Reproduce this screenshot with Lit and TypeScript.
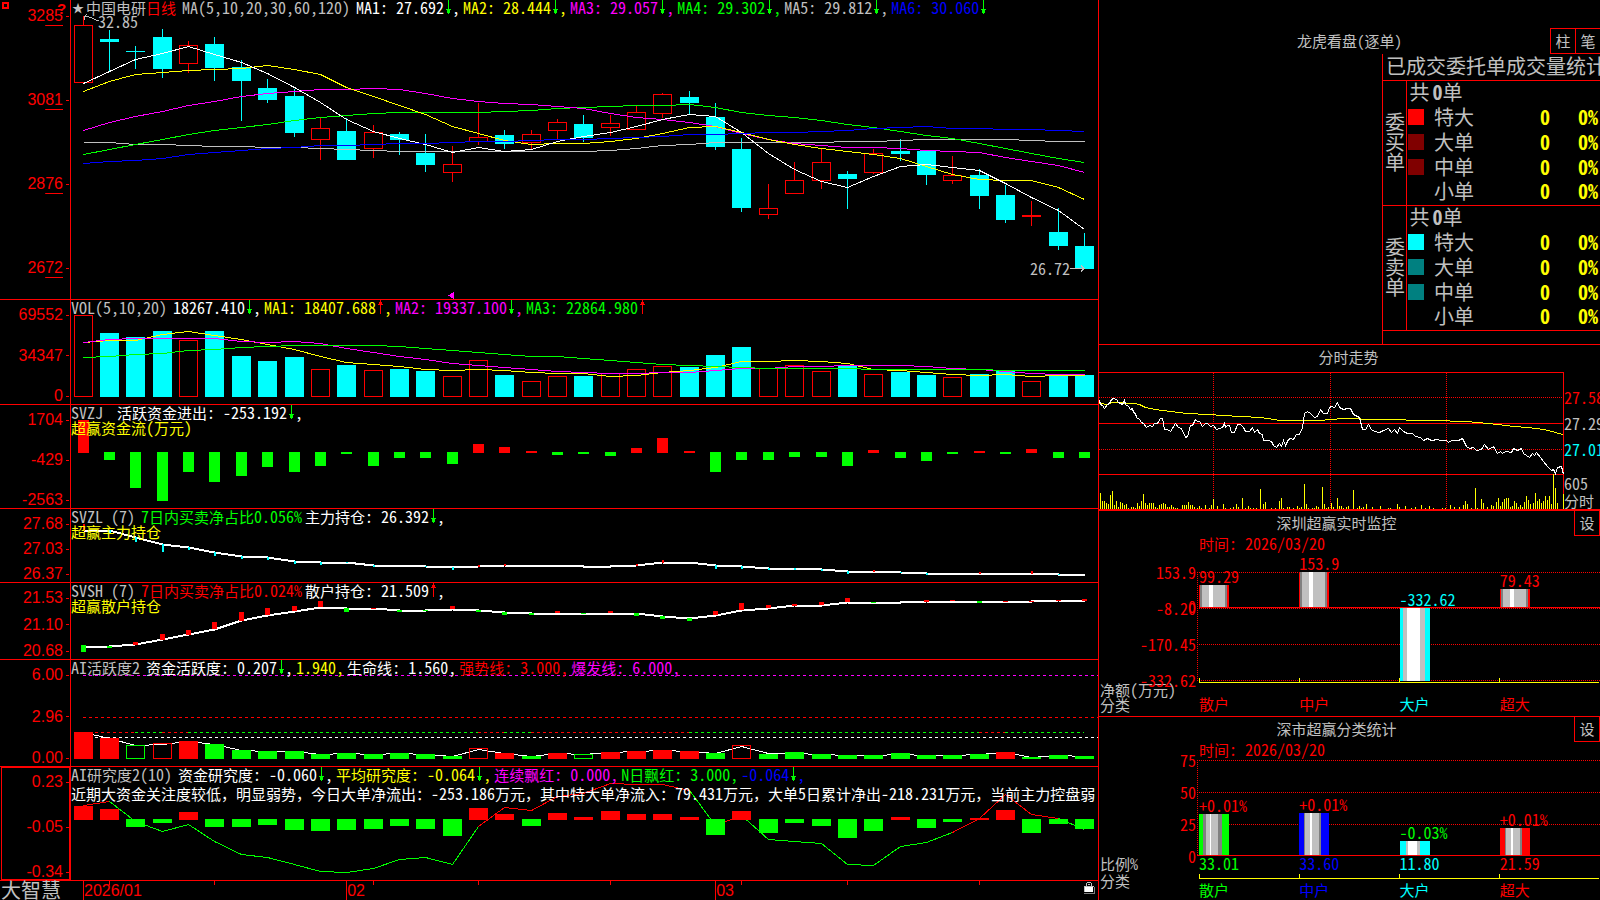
import { LitElement, html, css, svg, nothing } from "lit";
import { customElement } from "lit/decorators.js";

const RED = "#ff0000";
const CYAN = "#00ffff";
const GREEN = "#00ff00";
const YELLOW = "#ffff00";
const MAGENTA = "#ff00ff";
const BLUE = "#0000ff";
const WHITE = "#ffffff";
const SILVER = "#c0c0c0";
const GRAY = "#808080";

/* Centre of the n-th trading day on the shared time axis. */
const cx = (i: number) => Math.floor(83.2 + 26.35 * i);
/* Values are kept in thirds of a unit below the origin of their chart. */
const at = (origin: number, v: number) => Math.round(origin + v / 3);

type Candle = [string, number, number, number, number];
const CANDLES: Candle[] = [
  ["r", 16, 25, 83, 83], ["c", 30, 39, 42, 72], ["c", 46, 51, 52, 69], ["c", 29, 37, 69, 78],
  ["r", 41, 45, 64, 73], ["c", 37, 44, 68, 81], ["c", 60, 67, 81, 121], ["c", 79, 88, 100, 103],
  ["c", 89, 96, 133, 137], ["r", 118, 128, 140, 160], ["c", 118, 131, 160, 160], ["r", 125, 132, 149, 158],
  ["c", 132, 134, 140, 155], ["c", 134, 153, 165, 172], ["r", 146, 164, 173, 182], ["r", 103, 137, 142, 145],
  ["c", 130, 135, 144, 149], ["r", 130, 134, 143, 149], ["r", 119, 122, 131, 139], ["c", 115, 124, 138, 142],
  ["r", 115, 123, 128, 136], ["r", 106, 112, 130, 130], ["r", 93, 94, 114, 118], ["c", 91, 97, 103, 114],
  ["c", 103, 117, 147, 150], ["c", 138, 149, 208, 212], ["r", 184, 208, 215, 219], ["r", 162, 180, 194, 194],
  ["r", 148, 162, 181, 189], ["c", 171, 174, 179, 209], ["r", 149, 153, 173, 174], ["c", 139, 151, 154, 161],
  ["c", 151, 151, 175, 185], ["r", 156, 175, 181, 184], ["c", 169, 175, 196, 209], ["c", 185, 195, 220, 223],
  ["r", 201, 215, 217, 226], ["c", 208, 232, 246, 250], ["c", 233, 246, 269, 269],
];

const MA: [string, number[]][] = [
  [SILVER, [427, 427, 431, 433, 436, 437, 439, 442, 442, 445, 448, 451, 452, 454, 454, 454, 454, 454, 454, 452, 449, 443, 436, 431, 427, 427, 427, 427, 427, 424, 424, 421, 418, 418, 418, 418, 421, 424, 424]],
  [GREEN, [463, 447, 432, 417, 403, 390, 382, 372, 361, 352, 346, 340, 337, 337, 337, 337, 334, 330, 325, 322, 319, 316, 314, 313, 321, 335, 346, 351, 359, 371, 382, 394, 405, 415, 429, 444, 460, 474, 487]],
  [MAGENTA, [391, 367, 348, 333, 316, 304, 289, 280, 273, 268, 268, 265, 268, 280, 295, 304, 310, 313, 318, 325, 340, 351, 357, 365, 378, 400, 418, 430, 436, 441, 442, 445, 451, 452, 457, 470, 482, 496, 517]],
  [YELLOW, [274, 244, 223, 217, 209, 207, 203, 196, 208, 223, 262, 289, 315, 343, 378, 400, 420, 431, 428, 430, 423, 415, 400, 382, 377, 397, 418, 431, 443, 454, 463, 475, 498, 523, 538, 541, 541, 562, 596]],
  [WHITE, [250, 213, 177, 159, 139, 163, 187, 219, 260, 307, 357, 393, 415, 432, 457, 442, 452, 448, 422, 407, 397, 379, 356, 343, 348, 397, 458, 508, 543, 562, 528, 497, 493, 502, 511, 548, 590, 630, 686]],
  [BLUE, [490, 484, 479, 473, 463, 457, 451, 444, 441, 436, 436, 433, 430, 428, 427, 424, 422, 420, 418, 416, 414, 411, 407, 403, 401, 400, 397, 397, 394, 390, 385, 382, 379, 385, 385, 388, 388, 391, 394]],
];

const VOLUME = [76, 129, 141, 123, 151, 123, 198, 213, 201, 238, 225, 241, 237, 243, 259, 211, 255, 274, 259, 258, 250, 238, 229, 231, 195, 171, 235, 226, 244, 226, 253, 247, 255, 261, 252, 243, 274, 255, 255];
const VOLUME_MA: [string, number[]][] = [
  [YELLOW, [157, 151, 151, 131, 124, 136, 148, 163, 178, 197, 216, 223, 229, 238, 241, 238, 241, 246, 250, 250, 259, 256, 247, 240, 230, 214, 214, 211, 212, 218, 237, 241, 247, 252, 256, 253, 259, 256, 256]],
  [MAGENTA, [157, 148, 145, 145, 145, 145, 152, 157, 154, 160, 174, 186, 197, 208, 220, 226, 232, 238, 243, 246, 250, 250, 247, 247, 241, 235, 235, 229, 229, 226, 226, 226, 229, 233, 238, 244, 250, 253, 253]],
  [GREEN, [202, 197, 193, 188, 181, 177, 172, 169, 166, 166, 166, 166, 169, 175, 180, 187, 193, 198, 199, 205, 211, 217, 223, 226, 229, 232, 235, 235, 235, 235, 237, 238, 238, 238, 238, 241, 241, 241, 241]],
];

const FLOW = [391, 510, 594, 633, 546, 576, 558, 531, 546, 528, 492, 528, 504, 504, 522, 462, 471, 483, 495, 492, 498, 474, 444, 483, 546, 510, 510, 501, 501, 528, 480, 504, 513, 492, 483, 492, 477, 504, 504];

const MAIN_HOLD = [720, 720, 740, 761, 770, 785, 797, 802, 812, 817, 817, 824, 826, 827, 831, 829, 825, 825, 825, 827, 828, 825, 816, 816, 825, 829, 834, 834, 838, 843, 843, 845, 849, 849, 849, 849, 849, 851, 852];
const MAIN_MARKS: [number, number][] = [[0, 703], [1, 728], [2, 755], [3, 786], [4, 780], [5, 798], [6, 806], [7, 809], [8, 822], [9, 825], [10, 820], [11, 831], [13, 831], [14, 839], [15, 825], [16, 821], [21, 822], [22, 810], [24, 837], [25, 837], [26, 840], [27, 839], [28, 843], [29, 852], [30, 839], [31, 849], [32, 855], [34, 845], [36, 843], [37, 855]];

const RETAIL_HOLD = [198, 198, 193, 178, 163, 146, 121, 104, 92, 80, 84, 84, 90, 90, 86, 90, 97, 98, 98, 98, 98, 100, 108, 115, 104, 89, 83, 76, 74, 66, 66, 66, 64, 63, 63, 63, 63, 60, 60];
const RETAIL_MARKS: [number, string, number, number][] = [[0, "g", 195, 216], [1, "g", 198, 204], [2, "r", 185, 195], [3, "r", 162, 180], [4, "r", 150, 165], [5, "r", 126, 147], [6, "r", 96, 123], [7, "r", 84, 104], [8, "r", 78, 93], [9, "r", 63, 80], [10, "g", 84, 96], [11, "r", 84, 87], [12, "g", 90, 96], [13, "g", 90, 93], [14, "r", 78, 87], [15, "g", 90, 96], [16, "g", 96, 105], [17, "g", 98, 104], [18, "r", 93, 99], [19, "g", 99, 102], [20, "r", 93, 99], [21, "g", 99, 108], [22, "g", 108, 117], [23, "g", 114, 123], [24, "r", 93, 104], [25, "r", 69, 90], [26, "r", 75, 84], [27, "r", 72, 78], [28, "r", 66, 75], [29, "r", 54, 66], [30, "g", 66, 69], [32, "r", 60, 65], [33, "r", 60, 63], [34, "g", 63, 69], [35, "r", 63, 66], [36, "r", 63, 66], [37, "r", 60, 63], [38, "r", 57, 63]];

/* Upper case: solid bar. Lower case: outline only. */
const ACTIVE: [string, number][] = [["R", 456], ["R", 474], ["g", 495], ["r", 489], ["R", 483], ["G", 492], ["G", 510], ["G", 513], ["G", 513], ["G", 522], ["G", 519], ["G", 522], ["G", 519], ["G", 522], ["G", 528], ["r", 504], ["R", 519], ["G", 528], ["R", 519], ["g", 522], ["R", 516], ["R", 513], ["R", 510], ["R", 513], ["G", 519], ["r", 495], ["G", 522], ["G", 516], ["G", 522], ["G", 525], ["G", 525], ["G", 519], ["G", 525], ["G", 525], ["G", 522], ["R", 516], ["G", 531], ["G", 525], ["G", 528]];
const ACTIVE_LINE = [456, 474, 495, 491, 484, 492, 510, 513, 514, 522, 519, 523, 520, 523, 528, 506, 518, 527, 519, 523, 516, 513, 510, 514, 519, 497, 520, 518, 521, 525, 526, 521, 525, 526, 523, 517, 530, 526, 529];
const ACTIVE_BASE: [number, number, string][] = [[0, 2, RED], [2, 3, GREEN], [3, 4, RED], [4, 15, GREEN], [15, 16, RED], [16, 17, GREEN], [17, 23, RED], [23, 34, GREEN], [34, 35, RED], [35, 38, GREEN]];

const STUDY = [678, 687, 741, 729, 696, 741, 741, 735, 750, 753, 750, 747, 738, 747, 768, 684, 702, 738, 699, 711, 693, 702, 702, 711, 765, 693, 759, 729, 738, 774, 753, 711, 744, 726, 714, 690, 759, 732, 747];
const STUDY_LINE = [676, 662, 722, 754, 731, 784, 822, 832, 852, 874, 877, 865, 838, 832, 853, 738, 680, 690, 648, 640, 608, 612, 613, 631, 736, 704, 778, 782, 790, 852, 856, 797, 787, 757, 713, 641, 703, 714, 748];
const STUDY_RUNS: [number, number, string][] = [[0, 1, RED], [1, 15, GREEN], [15, 23, RED], [23, 24, GREEN], [24, 25, RED], [25, 33, GREEN], [33, 37, RED], [37, 38, GREEN]];

const TICK_PRICE = "27,180 30,193 36,194 43,204 50,193 58,190 63,178 68,175 78,178 85,187 95,192 99,185 103,180 106,193 113,198 119,207 125,205 128,216 134,219 137,231 146,237 153,247 160,248 167,262 176,255 186,258 192,250 201,248 210,234 215,234 222,268 230,266 240,274 254,250 265,260 274,265 285,290 290,288 300,256 306,254 314,238 320,242 326,242 335,258 344,250 352,249 360,258 368,254 378,268 388,265 396,262 401,249 405,262 412,255 418,256 422,277 433,277 441,251 450,251 460,260 466,274 477,272 487,260 492,276 500,267 507,280 515,283 520,301 535,300 542,304 549,314 557,322 566,308 572,318 579,301 586,314 594,297 601,294 610,297 618,281 628,283 637,262 643,220 651,214 659,220 672,232 680,227 690,206 698,218 710,220 718,202 724,198 733,202 742,187 748,202 760,206 770,203 779,203 790,223 800,229 808,232 817,268 825,266 833,253 842,268 853,274 866,276 880,270 895,264 902,275 912,268 920,280 928,262 940,272 952,278 965,278 975,288 990,292 1000,300 1012,293 1022,300 1040,297 1050,301 1068,301 1075,306 1082,301 1105,301 1117,295 1127,318 1137,324 1148,320 1158,329 1174,328 1182,313 1195,326 1210,317 1220,339 1230,332 1236,340 1245,334 1262,337 1270,325 1282,330 1292,324 1300,338 1318,352 1325,338 1333,346 1338,337 1350,352 1358,362 1370,379 1383,390 1390,386 1396,398 1402,380 1413,379 1420,402";
const TICK_AVG = "27,190 50,192 65,187 128,188 148,193 165,202 195,208 240,213 290,219 350,221 400,225 450,227 510,231 570,239 640,241 690,241 720,238 760,235 865,236 880,238 1015,239 1030,241 1125,243 1160,247 1220,251 1270,257 1310,260 1360,266 1385,273 1403,280 1420,281";
const TICK_VOL = "31,460 37,484 43,484 49,488 55,493 61,466 67,453 73,496 79,483 85,500 91,487 97,490 103,496 109,492 115,504 124,502 130,502 136,504 142,490 148,498 154,484 160,462 166,490 172,496 178,490 184,490 190,489 196,501 202,504 208,494 214,493 220,490 226,493 230,502 236,500 242,496 248,502 254,503 260,504 276,495 282,495 289,495 295,487 301,495 307,496 313,502 322,503 328,498 334,504 346,495 358,504 364,496 370,478 382,499 400,492 406,504 421,504 430,502 439,492 445,500 457,475 466,504 475,498 481,504 490,503 499,504 511,447 520,492 526,486 544,504 556,504 568,484 574,475 580,504 592,500 598,501 610,504 622,499 628,504 634,500 643,432 649,492 655,503 667,504 673,504 679,498 685,500 697,441 703,492 709,504 715,502 724,490 730,502 742,475 748,499 754,498 760,504 769,502 775,498 790,450 802,504 808,498 814,504 820,500 829,492 847,500 871,498 895,504 900,503 922,492 928,500 945,499 963,504 975,501 994,495 1006,504 1018,498 1030,504 1055,504 1066,503 1081,495 1093,501 1108,500 1120,495 1126,484 1132,492 1144,503 1156,444 1162,504 1174,478 1180,489 1192,500 1204,496 1210,499 1219,487 1225,475 1231,499 1237,486 1243,477 1249,475 1255,474 1261,501 1267,499 1273,484 1279,488 1285,500 1291,496 1297,500 1303,486 1309,468 1315,480 1321,492 1330,490 1336,459 1342,484 1348,477 1354,490 1360,484 1366,468 1372,480 1378,468 1384,492 1390,402 1396,444 1402,490 1420,462";

const pairs = (s: string) => s.split(" ").map((p) => p.split(",").map(Number));

const line = (color: string, origin: number, v: number[], width = 1, from = 0, to = v.length - 1) => svg`
  <polyline fill="none" stroke=${color} stroke-width=${width} vector-effect="non-scaling-stroke"
    points=${v.slice(from, to + 1).map((y, k) => `${cx(from + k) + 0.5},${at(origin, y) + 0.5}`).join(" ")} />`;

const box = (x: number, y: number, w: number, h: number, color: string, hollow = false) =>
  hollow
    ? svg`<rect x=${x + 0.5} y=${y + 0.5} width=${w - 1} height=${Math.max(h - 1, 1)} fill="none" stroke=${color} vector-effect="non-scaling-stroke" />`
    : svg`<rect x=${x} y=${y} width=${w} height=${h} fill=${color} />`;

const rule = (x1: number, y1: number, x2: number, y2: number, color: string, dash = "") =>
  svg`<line x1=${x1} y1=${y1} x2=${x2} y2=${y2} stroke=${color} stroke-dasharray=${dash || nothing} vector-effect="non-scaling-stroke" />`;

/* Han characters are set one size below the half-width ones. */
const mixed = (s: string) =>
  s.split(/([\u3000-\u9fff\uff00-\uffef]+)/).map((p, i) => (i % 2 ? html`<span class="han">${p}</span>` : p));

const arrow = (dir: string) =>
  dir === "down"
    ? html`<svg class="arrow" viewBox="0 0 8 15" shape-rendering="crispEdges"><path fill=${GREEN} d="M4 0h1v14h-1zM2 9h5v1h-5zM3 10h3v3h-3z" /></svg>`
    : html`<svg class="arrow" viewBox="0 0 8 15" shape-rendering="crispEdges"><path fill=${RED} d="M4 0h1v14h-1zM3 2h3v2h-3zM2 4h5v1h-5z" /></svg>`;

interface Item { color: string; text: string; dir?: string; tail?: string }
interface Panel {
  height: number; top: number; name: string; items: Item[]; note?: string; message?: string;
  ticks: string[]; chart: unknown; kind?: string;
}

const item = (color: string, text: string, dir = "", tail = ""): Item => ({ color, text, dir, tail });

const priceChart = () => svg`
  ${CANDLES.map(([k, hi, top, bot, lo], i) => {
    const c = cx(i);
    const color = k === "r" ? RED : CYAN;
    return svg`
      ${top > hi ? box(c, hi, 1, top - hi, color) : nothing}
      ${lo > bot ? box(c, bot, 1, lo - bot, color) : nothing}
      ${box(c - 9, top, 19, bot - top, color, k === "r")}`;
  })}
  ${MA.map(([c, v]) => line(c, 0, v))}
  <path d="M84 16.5h4l5 2 4 2h2M84.5 16v4M84 16.5l3-2" fill="none" stroke=${SILVER} />
  <path d="M1070 268.5h14M1081 265.5l3 3-3 3" fill="none" stroke=${SILVER} />
  <path d="M448 295.5l5-3v6zM453 292h1v7h-1z" fill=${MAGENTA} />`;

const volumeChart = () => svg`
  ${VOLUME.map((v, i) => {
    const y = at(290, v);
    return box(cx(i) - 9, y, 19, 397 - y, CANDLES[i][0] === "r" ? RED : CYAN, CANDLES[i][0] === "r");
  })}
  ${VOLUME_MA.map(([c, v]) => line(c, 290, v))}`;

const flowChart = () => svg`${FLOW.map((v, i) => {
  const y = at(290, v);
  return v < 487 ? box(cx(i) - 5, y, 11, 453 - y, RED) : box(cx(i) - 5, 452, 11, y - 452, GREEN);
})}`;

const mainHoldChart = () => svg`
  ${line(WHITE, 290, MAIN_HOLD, 2)}
  ${MAIN_MARKS.map(([i, v]) => {
    const a = at(290, MAIN_HOLD[i]);
    const b = at(290, v);
    return b < a ? box(cx(i), b, 2, a - b + 1, RED) : box(cx(i), a, 2, b - a, CYAN);
  })}`;

const retailHoldChart = () => svg`
  ${line(WHITE, 580, RETAIL_HOLD, 2)}
  ${RETAIL_MARKS.map(([i, k, a, b]) => box(cx(i) - 2, at(580, a), 5, at(580, b) - at(580, a), k === "r" ? RED : GREEN))}`;

const activeChart = () => svg`
  ${rule(83, 675.5, 1098, 675.5, MAGENTA, "3 3")}
  ${rule(83, 717.5, 1098, 717.5, RED, "3 3")}
  ${ACTIVE_BASE.map(([a, b, c]) => rule(cx(a), 732.5, cx(b), 732.5, c, "3 3"))}
  ${rule(83, 737.5, 1098, 737.5, WHITE, "3 3")}
  ${line(WHITE, 580, ACTIVE_LINE)}
  ${ACTIVE.map(([k, v], i) => {
    const y = at(580, v);
    return box(cx(i) - 9, y, 19, 759 - y, k.toUpperCase() === "R" ? RED : GREEN, k === k.toLowerCase());
  })}`;

const studyChart = () => svg`
  ${STUDY_RUNS.map(([a, b, c]) => line(c, 580, STUDY_LINE, 1, a, b))}
  ${STUDY.map((v, i) => {
    const y = at(580, v);
    return v < 717 ? box(cx(i) - 9, y, 19, 820 - y, RED) : box(cx(i) - 9, 819, 19, y - 819, GREEN);
  })}`;

const PANELS: Panel[] = [
  {
    height: 299, top: 0, name: "", kind: "price", ticks: ["3285", "3081", "2876", "2672"], chart: priceChart(),
    items: [
      item(WHITE, "MA1: 27.692", "down", ","), item(YELLOW, "MA2: 28.444", "down", ","),
      item(MAGENTA, "MA3: 29.057", "down", ","), item(GREEN, "MA4: 29.302", "down", ","),
      item(SILVER, "MA5: 29.812", "down", ","), item(BLUE, "MA6: 30.060", "down"),
    ],
  },
  {
    height: 104, top: 300, name: "VOL(5,10,20)", ticks: ["69552", "34347", "0"], chart: volumeChart(),
    items: [
      item(WHITE, "18267.410", "down", ","), item(YELLOW, "MA1: 18407.688", "up", ","),
      item(MAGENTA, "MA2: 19337.100", "down", ","), item(GREEN, "MA3: 22864.980", "up"),
    ],
  },
  {
    height: 103, top: 405, name: "SVZJ ", note: "超赢资金流(万元)", ticks: ["1704", "-429", "-2563"], chart: flowChart(),
    items: [item(WHITE, "活跃资金进出: -253.192", "down", ",")],
  },
  {
    height: 73, top: 509, name: "SVZL (7)", note: "超赢主力持仓", ticks: ["27.68", "27.03", "26.37"], chart: mainHoldChart(),
    items: [item(GREEN, "7日内买卖净占比0.056%"), item(WHITE, "主力持仓: 26.392", "down", ",")],
  },
  {
    height: 76, top: 583, name: "SVSH (7)", note: "超赢散户持仓", ticks: ["21.53", "21.10", "20.68"], chart: retailHoldChart(),
    items: [item(RED, "7日内买卖净占比0.024%"), item(WHITE, "散户持仓: 21.509", "up", ",")],
  },
  {
    height: 106, top: 660, name: "AI活跃度2", ticks: ["6.00", "2.96", "0.00"], chart: activeChart(),
    items: [
      item(WHITE, "资金活跃度: 0.207", "down", ","), item(YELLOW, "1.940,"), item(WHITE, "生命线: 1.560,"),
      item(RED, "强势线: 3.000,"), item(MAGENTA, "爆发线: 6.000,"),
    ],
  },
  {
    height: 113, top: 767, name: "AI研究度2(10)", kind: "selected", ticks: ["0.23", "-0.05", "-0.34"], chart: studyChart(),
    message: "近期大资金关注度较低，明显弱势，今日大单净流出：-253.186万元，其中特大单净流入：79.431万元，大单5日累计净出-218.231万元，当前主力控盘弱",
    items: [
      item(WHITE, "资金研究度: -0.060", "down", ","), item(YELLOW, "平均研究度: -0.064", "down", ","),
      item(MAGENTA, "连续飘红: 0.000,"), item(GREEN, "N日飘红: 3.000,"), item(BLUE, "-0.064", "down", ","),
    ],
  },
];

const MONTHS: [string, number][] = [["2026/01", 263], ["02", 369], ["03", 383]];

const stripes = (stops: [string, number][]) => {
  let from = 0;
  return `linear-gradient(90deg, ${stops.map(([c, to]) => { const s = `${c} ${from}px ${to}px`; from = to; return s; }).join(", ")})`;
};

interface Bar { label: string; labelColor: string; start: number; size: number; fill: string; value?: string; name: string; color: string }

const redBar = stripes([[RED, 1], [GRAY, 3], [SILVER, 10], [WHITE, 14], [SILVER, 26], [GRAY, 28], [RED, 30]]);
const NET: Bar[] = [
  { label: "99.29", labelColor: RED, start: 17, size: 22, fill: redBar, name: "散户", color: RED },
  { label: "153.9", labelColor: RED, start: 4, size: 35, fill: redBar, name: "中户", color: RED },
  { label: "-332.62", labelColor: CYAN, start: 40, size: 73, fill: stripes([[CYAN, 3], [SILVER, 7], [WHITE, 20], [SILVER, 25], [CYAN, 30]]), name: "大户", color: CYAN },
  { label: "79.43", labelColor: RED, start: 21, size: 18, fill: redBar, name: "超大", color: RED },
];
const SHARE: Bar[] = [
  { label: "+0.01%", labelColor: RED, start: 40, size: 41, value: "33.01", fill: stripes([[GREEN, 4], [GRAY, 7], [SILVER, 11], [WHITE, 12], [SILVER, 19], [GRAY, 23], [GREEN, 30]]), name: "散户", color: GREEN },
  { label: "+0.01%", labelColor: RED, start: 39, size: 42, value: "33.60", fill: stripes([[BLUE, 5], [GRAY, 6], [SILVER, 11], [WHITE, 13], [SILVER, 20], [GRAY, 22], [BLUE, 30]]), name: "中户", color: BLUE },
  { label: "-0.03%", labelColor: GREEN, start: 67, size: 14, value: "11.80", fill: stripes([[CYAN, 6], [SILVER, 8], [WHITE, 17], [SILVER, 20], [CYAN, 30]]), name: "大户", color: CYAN },
  { label: "+0.01%", labelColor: RED, start: 54, size: 27, value: "21.59", fill: stripes([[RED, 5], [GRAY, 6], [SILVER, 11], [WHITE, 13], [SILVER, 20], [GRAY, 22], [RED, 30]]), name: "超大", color: RED },
];

const GROUPS: [string, string[]][] = [
  ["委买单", ["#ff0000", "#800000", "#800000", "#000000"]],
  ["委卖单", ["#00ffff", "#008080", "#008080", "#000000"]],
];
const SIZES = ["特大", "大单", "中单", "小单"];

@customElement("app-root")
export class AppRoot extends LitElement {
  static styles = css`
    :host {
      display: grid;
      grid-template-columns: minmax(0, 1fr) 501px;
      height: 100vh;
      overflow: hidden;
      background: #000;
      color: #c0c0c0;
      font: 16px/15px "Noto Sans Mono CJK SC", "Noto Sans CJK SC", "Liberation Mono", monospace;
      white-space: nowrap;
    }
    * { box-sizing: border-box; }
    svg { display: block; }
    h2 { margin: 0; font: inherit; font-size: 15px; }
    .han { font-size: 15px; }
    button {
      width: 26px;
      height: 26px;
      margin: 0;
      padding: 0 0 2px;
      border: 1px solid #f00;
      background: #000;
      color: inherit;
      font: inherit;
      font-size: 15px;
    }

    .left { display: flex; flex-direction: column; min-width: 0; border-right: 1px solid #f00; }
    .panel { display: grid; grid-template: minmax(0, 1fr) / 71px minmax(0, 1fr); min-height: 0; border-bottom: 1px solid #f00; }
    .axis {
      position: relative;
      display: flex;
      flex-direction: column;
      justify-content: space-between;
      padding-top: 7px;
      border-right: 1px solid #f00;
      color: #f00;
      font: 16px/16px "Liberation Sans", sans-serif;
    }
    .price .axis { padding: 8px 0 23px; }
    .selected .axis { box-shadow: inset 1px 0 #000, inset 2px 0 #f00, inset 0 1px #f00, inset 0 -1px #f00, inset -1px 0 #f00; }
    .tick { display: flex; justify-content: flex-end; align-items: center; gap: 3px; padding-right: 1px; }
    .tick::after { content: ""; width: 3px; height: 1px; background: #f00; }
    .tick u { text-underline-offset: 4px; text-decoration-thickness: 1px; }
    .corner { position: absolute; left: 2px; top: 2px; width: 7px; height: 7px; border: 2px solid #f00; }
    .help { position: absolute; left: 57px; top: 1px; font-size: 15px; font-weight: bold; }
    .plot { position: relative; display: grid; grid-template: minmax(0, 1fr) / minmax(0, 1fr); min-height: 0; overflow: hidden; }
    .plot > * { grid-area: 1 / 1; }
    .chart { width: 100%; height: 100%; min-height: 0; }
    .info { position: relative; min-width: 0; }
    .heads { display: flex; gap: 3px; white-space: pre; }
    .heads > :first-child { margin-right: 3px; }
    .item { display: flex; }
    .arrow { width: 8px; height: 15px; flex: none; }
    .note { color: #ff0; line-height: 14px; }
    .message { padding-top: 4px; color: #fff; }
    .stock { display: flex; padding-left: 1px; }
    .star { width: 14px; font-size: 12px; }
    .period { color: #f00; padding-right: 6px; }
    .high { position: absolute; left: 27px; top: 14px; }
    .low { position: absolute; right: 28px; top: 261px; }

    .foot { display: grid; grid-template: minmax(0, 1fr) / 71px minmax(0, 1fr); flex: 19 1 0; min-height: 0; }
    .brand { padding-left: 1px; font-size: 20px; line-height: 17px; }
    .months { display: flex; width: 100%; padding-left: 12px; color: #f00; font: 16px/19px "Liberation Sans", sans-serif; }
    .month { border-left: 1px solid #f00; min-width: 0; }
    .lock { justify-self: end; width: 11px; height: 12px; margin: 1px 3px 0 0; }

    .right { display: flex; flex-direction: column; min-width: 0; overflow: hidden; }
    .sect { min-height: 0; border-bottom: 1px solid #f00; }
    .orders { display: flex; flex-direction: column; flex: 316 1 0; padding-top: 28px; }
    .bar { display: grid; grid-template-columns: 1fr auto 1fr; align-items: center; height: 26px; flex: none; }
    .bar .keys { display: flex; justify-content: flex-end; grid-column: 3; margin-right: -1px; }
    .bar .keys button + button { margin-left: -1px; }
    .bar h2 { grid-column: 2; padding-bottom: 2px; }
    .stats { flex: 1; min-height: 0; align-self: flex-end; width: 218px; border-left: 1px solid #f00; overflow: hidden; }
    .stats h3 { margin: 0; padding: 0 0 2px 3px; font: inherit; font-size: 20px; line-height: 24px; }
    table { width: 217px; table-layout: fixed; border-collapse: collapse; font-size: 20px; line-height: 20px; }
    tr { height: 25px; }
    td, th { padding: 0 0 3px; font-weight: normal; text-align: left; }
    tbody { border-top: 1px solid #f00; border-bottom: 1px solid #f00; }
    .side { width: 23px; border-right: 1px solid #f00; padding-left: 2px; white-space: normal; word-break: break-all; }
    .total { padding-left: 3px; }
    .num { color: #ff0; font-weight: bold; text-align: right; padding-right: 1px; }
    .total b { padding-left: 3px; }
    .last { padding-right: 2px; }
    .swatch { display: block; width: 16px; height: 16px; margin-left: 1px; }

    .trend { display: flex; flex-direction: column; flex: 164 1 0; border-bottom-width: 2px; }
    .trend h2 { line-height: 24px; height: 27px; text-align: center; margin-right: 2px; flex: none; }
    .trend .body { flex: 1; display: grid; grid-template: minmax(0, 1fr) / minmax(0, 1fr) 36px; min-height: 0; }
    .levels { display: flex; flex-direction: column; padding: 12px 0 0; overflow: hidden; line-height: 26px; }
    .levels .small { line-height: 17px; }
    .levels .push { margin-top: auto; }

    .monitor { display: flex; flex-direction: column; }
    .net { flex: 205 1 0; }
    .share { flex: 183 1 0; border-bottom: 0; }
    .head { display: grid; grid-template-columns: 1fr 26px; height: 25px; text-align: center; line-height: 23px; flex: none; }
    .head button { margin-top: -1px; }
    .area { display: grid; grid-template: minmax(0, 1fr) / 98px minmax(0, 1fr); flex: 1; min-height: 0; }
    .legend { display: grid; }
    .legend > * { grid-area: 1 / 1; }
    .scale { display: flex; flex-direction: column; color: #f00; text-align: right; line-height: 16px; padding-right: 1px; }
    .net .scale { padding-top: 28px; gap: 20px; }
    .share .scale { padding-top: 10px; gap: 16px; }
    .zero { position: absolute; right: 0; top: -2px; }
    .mark { position: relative; }
    .names { align-self: end; padding-left: 1px; }
    .net .names { padding-bottom: 4px; line-height: 15px; }
    .share .names { padding-bottom: 11px; line-height: 17px; }
    .time { color: #f00; height: 16px; line-height: 14px; padding-left: 2px; }
    .graph { display: grid; }
    .graph > * { grid-area: 1 / 1; width: 100%; }
    .net .graph { height: 131px; }
    .share .graph { height: 121px; }
    .cols { display: grid; grid-template-columns: repeat(4, 1fr); padding-left: 2px; line-height: 16px; min-width: 0; }
    .col { display: flex; flex-direction: column; min-width: 0; }
    .label { height: 16px; line-height: 14px; flex: none; }
    .stick { width: 30px; flex: none; }
    .net .cats { padding-top: 13px; }
    .share .cats { padding-top: 3px; }
  `;

  private panel(p: Panel) {
    return html`
      <section class="panel ${p.kind ?? ""}" style="flex: ${p.height} 1 0">
        <div class="axis">
          ${p.ticks.map((t) => html`<span class="tick">${p.kind === "price" ? html`<span>${t.slice(0, 2)}<u>${t.slice(2)}</u></span>` : t}</span>`)}
          ${p.kind === "price" ? html`<i class="corner"></i><span class="help">?</span>` : nothing}
        </div>
        <div class="plot">
          <svg class="chart" viewBox="71 ${p.top} 1027 ${p.height}" preserveAspectRatio="none" shape-rendering="crispEdges">${p.chart}</svg>
          <div class="info">
            <div class="heads">
              ${p.kind === "price"
                ? html`<span class="stock"><span class="star">★</span><span class="han">中国电研</span><span class="han period">日线</span>MA(5,10,20,30,60,120)</span>`
                : html`<span>${mixed(p.name)}</span>`}
              ${p.items.map((i) => html`<span class="item" style="color: ${i.color}"><span>${mixed(i.text)}</span>${i.dir ? arrow(i.dir) : nothing}${i.tail}</span>`)}
            </div>
            ${p.note ? html`<div class="note">${mixed(p.note)}</div>` : nothing}
            ${p.message ? html`<div class="message">${mixed(p.message)}</div>` : nothing}
          </div>
          ${p.kind === "price" ? html`<span class="high">32.85</span><span class="low">26.72</span>` : nothing}
        </div>
      </section>`;
  }

  private monitor(kind: string, title: string, unit: string, scale: string[], bars: Bar[], plot: unknown, viewBox: string) {
    return html`
      <section class="sect monitor ${kind}">
        <div class="head"><h2>${title}</h2><button>设</button></div>
        <div class="area">
          <div class="legend">
            <div class="scale">${scale.map((s) => html`<span class="mark">${s}${s === "-8.20" ? html`<span class="zero">0</span>` : nothing}</span>`)}</div>
            <div class="names">${mixed(unit)}<br />${mixed("分类")}</div>
          </div>
          <div>
            <div class="time">${mixed("时间: 2026/03/20")}</div>
            <div class="graph">
              <svg class="chart" viewBox=${viewBox} preserveAspectRatio="none" shape-rendering="crispEdges">${plot}</svg>
              <div class="cols">
                ${bars.map((b) => html`
                  <div class="col" style="padding-top: ${b.start}px">
                    <span class="label" style="color: ${b.labelColor}">${b.label}</span>
                    <span class="stick" style="height: ${b.size}px; background: ${b.fill}"></span>
                    ${b.value ? html`<span style="color: ${b.color}">${b.value}</span>` : nothing}
                  </div>`)}
              </div>
            </div>
            <div class="cols cats">${bars.map((b) => html`<span class="han" style="color: ${b.color}">${b.name}</span>`)}</div>
          </div>
        </div>
      </section>`;
  }

  render() {
    const tx = (x: number) => Math.round(1090 + x / 3);
    const ty = (y: number) => Math.round(340 + y / 3);
    const poly = (s: string) => pairs(s).map(([x, y]) => `${tx(x) + 0.5},${ty(y) + 0.5}`).join(" ");
    const ruler = (y: number) => svg`
      <path fill="none" stroke=${YELLOW} d="M1199.5 ${y - 4}V${y + 0.5}H1599M1299.5 ${y - 4}v4M1399.5 ${y - 4}v4M1499.5 ${y - 4}v4" />`;
    return html`
      <main class="left">
        ${PANELS.map((p) => this.panel(p))}
        <footer class="foot">
          <span class="brand">大智慧</span>
          <div class="plot">
            <svg class="chart" viewBox="71 881 1027 19" preserveAspectRatio="none" shape-rendering="crispEdges">
              ${[1, 5, 11, 15, 20, 25, 29, 34].map((i) => box(cx(i), 881, 1, 4, RED))}
            </svg>
            <div class="months">${MONTHS.map(([m, w]) => html`<span class="month" style="flex: ${w} 1 0">${m}</span>`)}</div>
            <svg class="lock" viewBox="0 0 11 12" shape-rendering="crispEdges">
              <path fill=${SILVER} d="M3 0h4v1h-4zM2 1h1v3h-1zM7 1h1v3h-1zM4 2h2v1h-2z" />
              <path fill="#fff" d="M1 5h8v5h-8z" /><path fill=${SILVER} d="M0 4h10v1h-10zM0 5h1v5h-1z" />
              <path fill=${GRAY} d="M10 5h1v7h-11v-1h10z" />
            </svg>
          </div>
        </footer>
      </main>
      <aside class="right">
        <section class="sect orders">
          <div class="bar">
            <h2>${mixed("龙虎看盘(逐单)")}</h2>
            <span class="keys"><button>柱</button><button>笔</button></span>
          </div>
          <div class="stats">
            <h3>已成交委托单成交量统计</h3>
            <table>
              <colgroup><col style="width: 23px" /><col style="width: 28px" /><col style="width: 60px" /><col style="width: 57px" /><col style="width: 49px" /></colgroup>
              ${GROUPS.map(([side, colors]) => html`
                <tbody>
                  <tr><th class="side" rowspan="5">${side}</th><td class="total" colspan="4">共<b>0</b>单</td></tr>
                  ${SIZES.map((s, i) => html`
                    <tr>
                      <td><span class="swatch" style="background: ${colors[i]}"></span></td>
                      <th>${s}</th><td class="num">0</td><td class="num last">0%</td>
                    </tr>`)}
                </tbody>`)}
            </table>
          </div>
        </section>
        <section class="sect trend">
          <h2>分时走势</h2>
          <div class="body">
            <svg class="chart" viewBox="1099 372 465 137" preserveAspectRatio="none" shape-rendering="crispEdges">
              ${[1213.5, 1330.5, 1446.5].map((x) => rule(x, 373, x, 509, RED, "1 1"))}
              ${[397.5, 449.5].map((y) => rule(1099, y, 1563, y, RED, "1 1"))}
              ${[372.5, 423.5, 474.5].map((y) => rule(1099, y, 1564, y, RED))}
              ${rule(1563.5, 372, 1563.5, 509, RED)}
              ${pairs(TICK_VOL).map(([x, y]) => box(tx(x), ty(y), 1, 509 - ty(y), YELLOW))}
              <polyline fill="none" stroke=${YELLOW} points=${poly(TICK_AVG)} />
              <polyline fill="none" stroke=${WHITE} points=${poly(TICK_PRICE)} />
            </svg>
            <div class="levels">
              <span style="color: ${RED}">27.58</span><span>27.29</span><span style="color: ${CYAN}">27.01</span>
              <span class="small push">605</span><span class="small han">分时</span>
            </div>
          </div>
        </section>
        ${this.monitor("net", "深圳超赢实时监控", "净额(万元)", ["153.9", "-8.20", "-170.45", "-332.62"], NET, svg`
          ${rule(1197.5, 572, 1197.5, 680, RED, "1 1")}
          ${[572.5, 608.5, 644.5, 680.5].map((y) => rule(1197, y, 1600, y, RED, "1 1"))}
          ${rule(1199, 607.5, 1600, 607.5, RED)}
          ${ruler(682)}`, "1197 552 403 131")}
        ${this.monitor("share", "深市超赢分类统计", "比例%", ["75", "50", "25", "0"], SHARE, svg`
          ${rule(1197.5, 760, 1197.5, 855, RED, "1 1")}
          ${[760.5, 792.5, 824.5].map((y) => rule(1197, y, 1600, y, RED, "1 1"))}
          ${rule(1197, 855.5, 1600, 855.5, RED)}
          ${ruler(878)}`, "1197 758 403 121")}
      </aside>`;
  }
}
